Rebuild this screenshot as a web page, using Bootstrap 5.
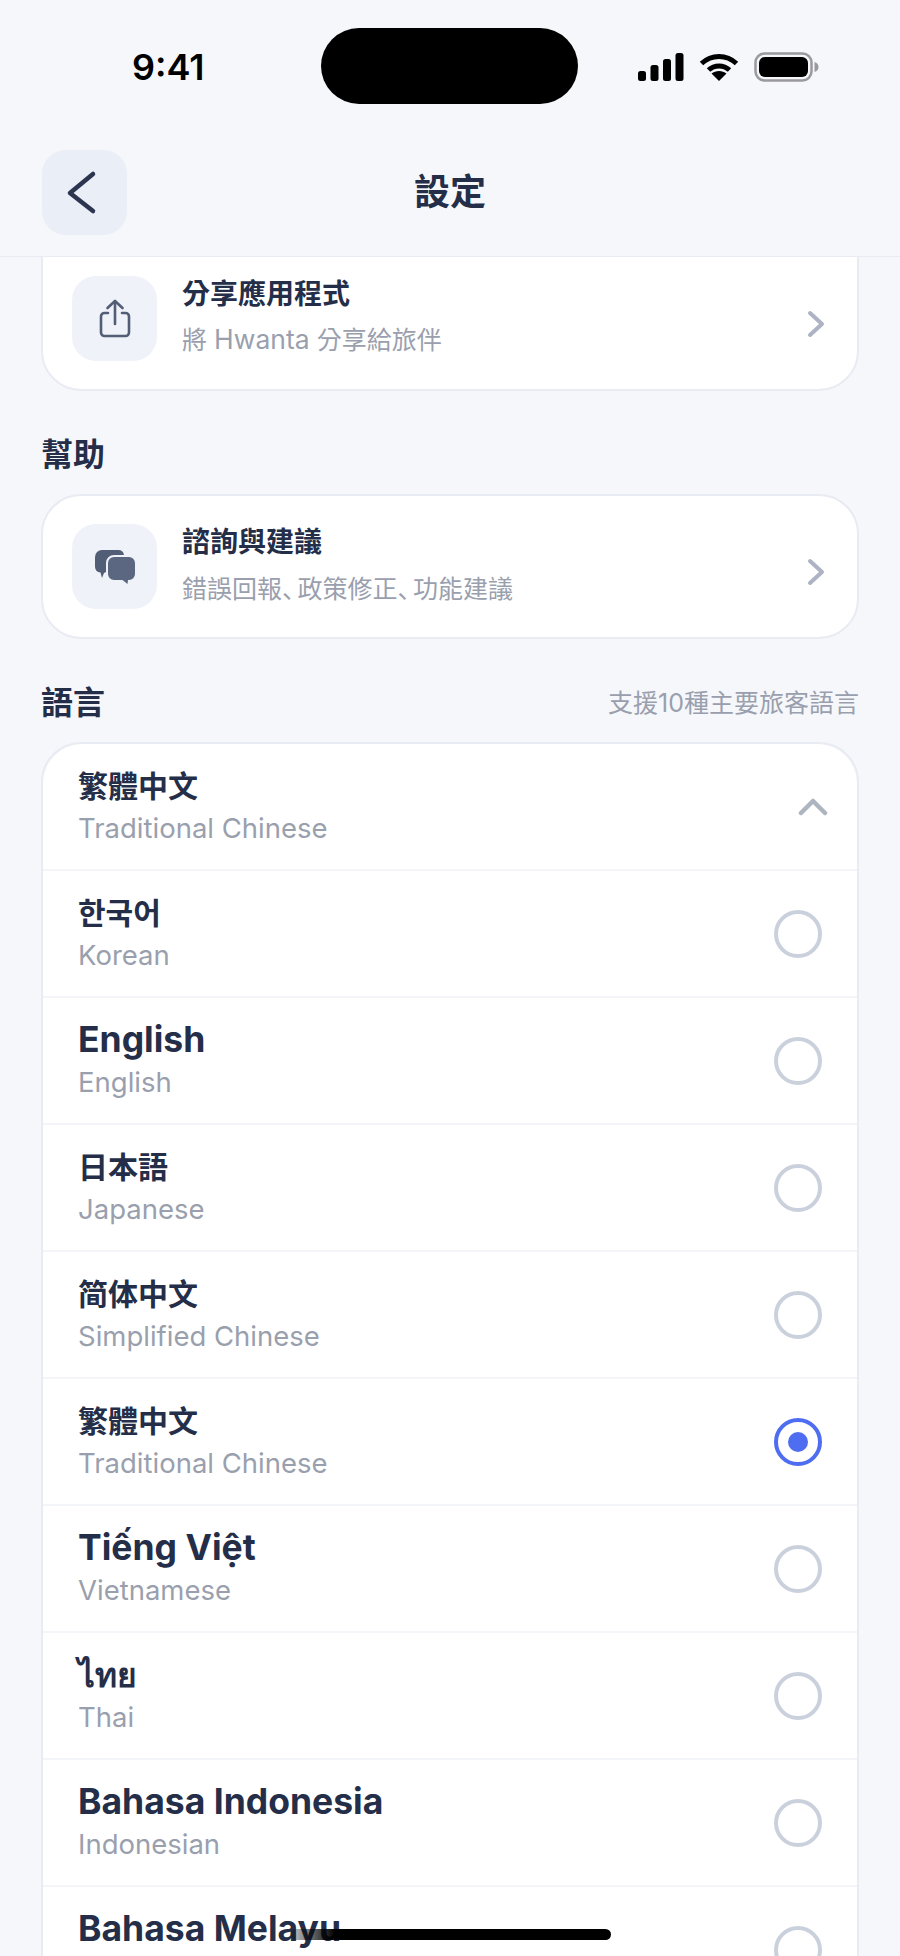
<!DOCTYPE html>
<html lang="zh-Hant">
<head>
  <meta charset="UTF-8">
  <meta name="viewport" content="width=device-width, initial-scale=1.0">
  <title>設定</title>
  <link href="https://cdn.jsdelivr.net/npm/bootstrap@5.3.0/dist/css/bootstrap.min.css" rel="stylesheet">
  <style>
    html, body { height: 100%; }
    body {
      background: #f5f7fb;
      color: #252e48;
      font-family: Inter, "Noto Sans CJK TC", "Noto Sans", sans-serif;
      overflow: hidden;
    }
    .phone { height: 1956px; }
    .top-area { border-bottom: 1px solid #e9ecf2; padding: 28px 42px 21px; }
    .status-row { height: 76px; margin-bottom: 46px; padding-left: 90px; }
    .clock { width: 189px; font-size: 36px; font-weight: 600; color: #000; line-height: 1; padding-top: 2px; }
    .island { width: 257px; height: 76px; background: #000; border-radius: 38px; }
    .status-icons { margin-left: 60px; gap: 15px; padding-top: 1px; }
    .back-btn { width: 85px; height: 85px; border-radius: 24px; background: #eaeef6; border: 0; padding: 0; }
    .nav-title { font-size: 36px; font-weight: 700; line-height: 85px; }
    .spacer { width: 85px; }

    .scroller { padding: 0 41px; overflow: hidden; }
    .set-card { border: 2px solid #e8ebf2; border-radius: 40px; background: #fff; padding: 28px 28px 28px 29px; }
    /* first card is scrolled under the header, its top corners are out of view */
    .set-card.cut { margin-top: -71px; padding-top: 88px; }
    .icon-box { width: 85px; height: 85px; border-radius: 24px; background: #eff2f8; flex-shrink: 0; }
    .set-text { margin-left: 25px; }
    .set-title { font-size: 28px; font-weight: 700; line-height: 36px; }
    .set-sub { font-size: 25px; color: #9a9fae; line-height: 36px; margin-top: 9px; }
    .set-sub .word { font-size: 26.5px; }
    .set-sub .comma { font-family: "Noto Sans CJK SC", sans-serif; font-feature-settings: "halt"; letter-spacing: 3px; }
    .go-arrow { margin-top: 34px; margin-right: 3px; }

    .sect-head { margin: 42px 0 17px; line-height: 44px; }
    .sect-title { font-size: 32px; font-weight: 700; }
    .sect-note { font-size: 25px; color: #9a9fae; }

    .lang-list { border: 2px solid #e8ebf2; border-radius: 40px; overflow: hidden; }
    .lang-list .list-group-item { border: 0; border-bottom: 2px solid #f3f5f9; height: 127px; padding: 0 35px; color: #252e48; }
    .lang-name { font-size: 30px; font-weight: 700; line-height: 42px; }
    .lang-name.latin { font-size: 35.5px; }
    .lang-name.thai { font-size: 33.5px; font-weight: 600; }
    .lang-en { font-size: 27.5px; color: #9a9fae; line-height: 42px; }
    .radio-dot { width: 48px; height: 48px; border-radius: 50%; border: 4px solid #cbd1dc; flex-shrink: 0; }
    .radio-dot.on { border-color: #4f6df0; }
    .radio-dot.on::after { content: ""; width: 20px; height: 20px; border-radius: 50%; background: #4f6df0; }
    .up-arrow { margin-right: -6px; }

    .home-bar {
      position: absolute; left: 290px; bottom: 16px; width: 321px; height: 11px; border-radius: 6px;
      background: linear-gradient(90deg, rgba(0,0,0,.2) 0, #000 45px);
    }
  </style>
</head>
<body>
  <div class="phone position-relative d-flex flex-column">
    <header class="top-area flex-shrink-0">
      <div class="status-row d-flex align-items-center">
        <div class="clock">9:41</div>
        <div class="island"></div>
        <div class="status-icons d-flex align-items-center">
          <svg width="46" height="28" viewBox="0 0 46 28"><rect x="0" y="18" width="8" height="10" rx="2.5"/><rect x="12.5" y="12" width="8" height="16" rx="2.5"/><rect x="25" y="6" width="8" height="22" rx="2.5"/><rect x="37.5" y="0" width="8" height="28" rx="2.5"/></svg>
          <svg width="40" height="28" viewBox="0 0 40 28" fill="none" stroke="#000" stroke-width="5"><path d="M2.5 10.5C12.5 1 27.5 1 37.5 10.5"/><path d="M9.5 17C15.5 11.5 24.5 11.5 30.5 17"/><path d="M20 28l-7.500-7.500C16.500 17 23.500 17 27.500 20.500z" fill="#000" stroke="none"/></svg>
          <svg width="65" height="30" viewBox="0 0 65 30"><rect x="1.500" y="1.500" width="56" height="27" rx="9" fill="none" stroke="#9a9a9e" stroke-width="2.500"/><rect x="5" y="5" width="49" height="20" rx="6"/><path d="M60.500 10c2.500.5 4 2.500 4 5s-1.500 4.500-4 5z" fill="#9a9a9e"/></svg>
        </div>
      </div>
      <div class="d-flex align-items-center">
        <button class="back-btn d-flex align-items-center justify-content-center" aria-label="返回">
          <svg width="85" height="85" viewBox="0 0 85 85" fill="none" stroke="#2c3550" stroke-width="4.500" stroke-linecap="round" stroke-linejoin="round"><path d="M51 24L28 43L51 61" /></svg>
        </button>
        <div class="nav-title flex-grow-1 text-center">設定</div>
        <div class="spacer"></div>
      </div>
    </header>

    <main class="scroller flex-grow-1">
      <div class="set-card cut d-flex align-items-start">
        <div class="icon-box d-flex align-items-center justify-content-center">
          <svg width="36" height="42" viewBox="0 0 36 42" fill="none" stroke="#525d76" stroke-width="2.600" stroke-linecap="round" stroke-linejoin="round"><path d="M11 15H7.500A3.500 3.500 0 0 0 4 18.500v16A3.500 3.500 0 0 0 7.500 38h21a3.500 3.500 0 0 0 3.500-3.500v-16a3.500 3.500 0 0 0-3.500-3.500H25"/><path d="M18 26V3"/><path d="M10.500 10L18 3l7.500 7"/></svg>
        </div>
        <div class="set-text flex-grow-1">
          <div class="set-title">分享應用程式</div>
          <div class="set-sub">將 <span class="word">Hwanta</span> 分享給旅伴</div>
        </div>
        <svg class="go-arrow" width="20" height="28" viewBox="0 0 20 28" fill="none" stroke="#adb3c2" stroke-width="4" stroke-linecap="round" stroke-linejoin="round"><path d="M4 3l12 11L4 25"/></svg>
      </div>

      <div class="sect-head d-flex justify-content-between align-items-center">
        <div class="sect-title">幫助</div>
      </div>
      <div class="set-card d-flex align-items-start">
        <div class="icon-box d-flex align-items-center justify-content-center">
          <svg width="40" height="34" viewBox="0 0 40 34"><path d="M7 0h16a6 6 0 0 1 6 5H19a8 8 0 0 0-8 8v9l-2 1-2 5-1.500-5.500A6 6 0 0 1 0 17V7a7 7 0 0 1 7-7z" fill="#525d76"/><path d="M19 7h15a6 6 0 0 1 6 6v11a6 6 0 0 1-6 6h-1l-.5 4-5-4H19a6 6 0 0 1-6-6V13a6 6 0 0 1 6-6z" fill="#5b6781"/></svg>
        </div>
        <div class="set-text flex-grow-1">
          <div class="set-title">諮詢與建議</div>
          <div class="set-sub">錯誤回報<span class="comma" lang="zh-Hans">、</span>政策修正<span class="comma" lang="zh-Hans">、</span>功能建議</div>
        </div>
        <svg class="go-arrow" width="20" height="28" viewBox="0 0 20 28" fill="none" stroke="#adb3c2" stroke-width="4" stroke-linecap="round" stroke-linejoin="round"><path d="M4 3l12 11L4 25"/></svg>
      </div>

      <div class="sect-head d-flex justify-content-between align-items-center">
        <div class="sect-title">語言</div>
        <div class="sect-note">支援10種主要旅客語言</div>
      </div>
      <div id="langs" class="list-group lang-list"></div>
    </main>

    <div class="home-bar"></div>
  </div>

  <script>
    const langs = [
      { name: "繁體中文", en: "Traditional Chinese", head: true },
      { name: "한국어", en: "Korean", lang: "ko" },
      { name: "English", en: "English", kind: "latin" },
      { name: "日本語", en: "Japanese", lang: "ja" },
      { name: "简体中文", en: "Simplified Chinese", lang: "zh-Hans" },
      { name: "繁體中文", en: "Traditional Chinese", on: true },
      { name: "Tiếng Việt", en: "Vietnamese", kind: "latin" },
      { name: "ไทย", en: "Thai", kind: "thai" },
      { name: "Bahasa Indonesia", en: "Indonesian", kind: "latin" },
      { name: "Bahasa Melayu", en: "Malay", kind: "latin" }
    ];

    const upArrow = `<svg class="up-arrow" width="30" height="20" viewBox="0 0 30 20" fill="none" stroke="#adb5c0" stroke-width="4.500" stroke-linecap="round" stroke-linejoin="round"><path d="M3 16L15 4l12 12"/></svg>`;

    document.getElementById("langs").innerHTML = langs.map(l => `
      <div class="list-group-item d-flex justify-content-between align-items-center">
        <div>
          <div class="lang-name ${l.kind || ""}" ${l.lang ? `lang="${l.lang}"` : ""}>${l.name}</div>
          <div class="lang-en">${l.en}</div>
        </div>
        ${l.head ? upArrow : `<div class="radio-dot d-flex align-items-center justify-content-center ${l.on ? "on" : ""}"></div>`}
      </div>`).join("");
  </script>
  <script src="https://cdn.jsdelivr.net/npm/bootstrap@5.3.0/dist/js/bootstrap.bundle.min.js"></script>
</body>
</html>
